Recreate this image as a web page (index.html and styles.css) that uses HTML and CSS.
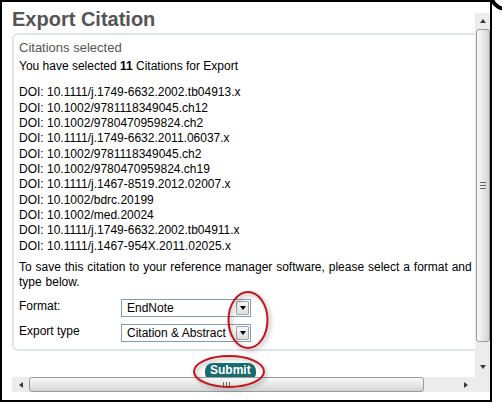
FILE: index.html
```html
<!DOCTYPE html>
<html>
<head>
<meta charset="utf-8">
<title>Export Citation</title>
<link rel="stylesheet" href="styles.css">
</head>
<body>
<div class="frame">
  <div class="close-btn" aria-label="Close"></div>
  <div class="dialog">
    <div class="content">
      <div class="page">
        <h1 class="title">Export Citation</h1>
        <div class="box">
          <div class="box-title">Citations selected</div>
          <p class="summary">You have selected <b>11</b> Citations for Export</p>
          <ul class="doi-list">
            <li>DOI: 10.1111/j.1749-6632.2002.tb04913.x</li>
            <li>DOI: 10.1002/9781118349045.ch12</li>
            <li>DOI: 10.1002/9780470959824.ch2</li>
            <li>DOI: 10.1111/j.1749-6632.2011.06037.x</li>
            <li>DOI: 10.1002/9781118349045.ch2</li>
            <li>DOI: 10.1002/9780470959824.ch19</li>
            <li>DOI: 10.1111/j.1467-8519.2012.02007.x</li>
            <li>DOI: 10.1002/bdrc.20199</li>
            <li>DOI: 10.1002/med.20024</li>
            <li>DOI: 10.1111/j.1749-6632.2002.tb04911.x</li>
            <li>DOI: 10.1111/j.1467-954X.2011.02025.x</li>
          </ul>
          <p class="hint">To save this citation to your reference manager software, please select a format and type below.</p>
          <div class="form-row">
            <span class="label">Format:</span>
            <div class="select"><span class="select-value">EndNote</span><span class="drop"></span></div>
          </div>
          <div class="form-row">
            <span class="label">Export type</span>
            <div class="select"><span class="select-value">Citation &amp; Abstract</span><span class="drop"></span></div>
          </div>
        </div>
        <div class="actions"><span class="submit">Submit</span></div>
      </div>
    </div>
    <div class="vbar">
      <span class="sb-btn"><span class="arr-up"></span></span>
      <span class="vthumb"><span class="grip-v"></span></span>
      <span class="spacer"></span>
      <span class="sb-btn down"><span class="arr-down"></span></span>
    </div>
    <div class="hbar">
      <span class="sb-btn"><span class="arr-left"></span></span>
      <span class="hthumb"><span class="grip-h"></span></span>
      <span class="spacer"></span>
      <span class="sb-btn right"><span class="arr-right"></span></span>
    </div>
    <div class="corner"></div>
  </div>
  <svg class="marks" viewBox="0 0 502 404" width="502" height="404">
    <ellipse cx="248" cy="320" rx="19.5" ry="28"></ellipse>
    <ellipse cx="229" cy="371.5" rx="35" ry="15.5"></ellipse>
  </svg>
</div>
</body>
</html>
```

FILE: styles.css
```css
html, body {
  margin: 0;
  padding: 0;
  overflow: hidden;
  background: #fff;
}

body {
  font-family: "Liberation Sans", Arial, sans-serif;
  font-size: 12px;
  color: #000;
}

.frame {
  position: relative;
  width: 488px;
  height: 398px;
  border: 2px solid #000;
}

.close-btn {
  position: absolute;
  left: 487px;
  top: -25px;
  width: 34px;
  height: 34px;
  box-sizing: border-box;
  border-radius: 50%;
  border: 4px solid #000;
  background: #fff;
}

.dialog {
  display: grid;
  grid-template-columns: 463px 15px;
  grid-template-rows: 369px 15px;
  padding: 6px 0 8px 10px;
}

.content {
  grid-column: 1;
  grid-row: 1;
  overflow: hidden;
}

.page {
  width: 510px;
}

.title {
  margin: 0;
  font-size: 20px;
  line-height: 23px;
  font-weight: bold;
  color: #555;
}

.box {
  margin-top: 2px;
  width: 466px;
  padding: 5px 5px 7px;
  border: 2px solid #dfe6eb;
  border-radius: 6px;
}

.box-title {
  font-size: 13px;
  line-height: 15px;
  color: #555;
  margin-bottom: 4px;
}

.summary {
  margin: 0 0 11px;
  line-height: 15.33px;
}

.doi-list {
  list-style: none;
  margin: 0 0 6px;
  padding: 0;
  line-height: 15.33px;
}

.hint {
  margin: 0 0 8px;
  line-height: 15.33px;
  word-spacing: 0.55px;
}

.form-row {
  display: flex;
  height: 18px;
}

.form-row + .form-row {
  margin-top: 7px;
}

.label {
  width: 102px;
  line-height: 15.33px;
}

.select {
  box-sizing: border-box;
  width: 130px;
  height: 18px;
  border: 1px solid #7f9db9;
  background: #fff;
  display: flex;
}

.select-value {
  flex: 1;
  padding-left: 5px;
  line-height: 16px;
  white-space: nowrap;
  overflow: hidden;
}

.drop {
  flex: none;
  box-sizing: border-box;
  width: 13px;
  height: 14px;
  margin: 1px;
  border: 1px solid #a3a3a3;
  border-radius: 1px;
  background: linear-gradient(#f8f8f8, #dedede);
  display: flex;
  align-items: center;
  justify-content: center;
}

.drop::after {
  content: "";
  border-left: 3.5px solid transparent;
  border-right: 3.5px solid transparent;
  border-top: 4px solid #000;
}

.actions {
  margin-top: 12px;
  padding-left: 193px;
}

.submit {
  display: inline-block;
  background: #196b72;
  color: #fff;
  font-weight: bold;
  font-size: 12px;
  line-height: 15px;
  padding: 0 5px 3px;
  border-radius: 8px;
}

/* scrollbars */
.vbar {
  grid-column: 2;
  grid-row: 1;
  margin-top: 5px;
  background: #ececec;
  display: flex;
  flex-direction: column;
}

.sb-btn {
  flex: none;
  width: 15px;
  height: 16px;
  display: flex;
  align-items: center;
  justify-content: center;
}

.vbar .down {
  margin-bottom: 2px;
}

.spacer {
  flex: 1;
}

.vthumb {
  flex: none;
  box-sizing: border-box;
  width: 14px;
  height: 313px;
  margin-left: 1px;
  border: 1px solid #9b9b9b;
  border-radius: 3px;
  background: linear-gradient(to right, #f8f8f8, #e8e8e8 50%, #d4d4d4);
  display: flex;
  align-items: center;
  justify-content: center;
}

.grip-v {
  width: 6px;
  height: 7px;
  background: linear-gradient(#666 0 1px, transparent 1px 3px, #666 3px 4px, transparent 4px 6px, #666 6px 7px);
}

.hbar {
  grid-column: 1;
  grid-row: 2;
  background: #ececec;
  display: flex;
  align-items: center;
}

.hbar .sb-btn {
  width: 17px;
  height: 15px;
}

.hbar .right {
  width: 15px;
  margin-right: 2px;
}

.hthumb {
  flex: none;
  box-sizing: border-box;
  width: 395px;
  height: 15px;
  border: 1px solid #9b9b9b;
  border-radius: 3px;
  background: linear-gradient(#f8f8f8, #e8e8e8 50%, #d4d4d4);
  display: flex;
  align-items: center;
  justify-content: center;
}

.grip-h {
  width: 7px;
  height: 6px;
  background: linear-gradient(to right, #666 0 1px, transparent 1px 3px, #666 3px 4px, transparent 4px 6px, #666 6px 7px);
}

.corner {
  grid-column: 2;
  grid-row: 2;
  background: #ececec;
}

.arr-up {
  border-left: 3.5px solid transparent;
  border-right: 3.5px solid transparent;
  border-bottom: 4px solid #3a3a3a;
}

.arr-down {
  border-left: 3.5px solid transparent;
  border-right: 3.5px solid transparent;
  border-top: 4px solid #3a3a3a;
}

.arr-left {
  border-top: 3.5px solid transparent;
  border-bottom: 3.5px solid transparent;
  border-right: 4px solid #3a3a3a;
}

.arr-right {
  border-top: 3.5px solid transparent;
  border-bottom: 3.5px solid transparent;
  border-left: 4px solid #3a3a3a;
}

/* annotation marks */
.marks {
  position: absolute;
  left: -2px;
  top: -2px;
  pointer-events: none;
  overflow: visible;
}

.marks ellipse {
  fill: none;
  stroke: #c4141a;
  stroke-width: 2;
  filter: drop-shadow(2px 2px 2px rgba(0, 0, 0, 0.35));
}
```
